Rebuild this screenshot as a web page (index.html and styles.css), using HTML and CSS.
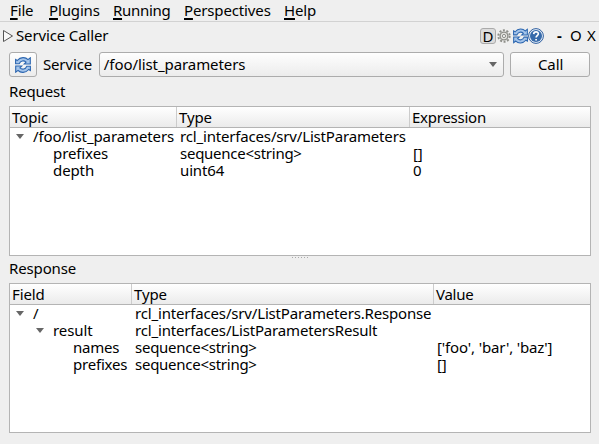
FILE: index.html
```html
<!DOCTYPE html>
<html lang="en">
<head>
<meta charset="utf-8">
<title>Service Caller</title>
<link rel="stylesheet" href="styles.css">
</head>
<body>
<svg class="defs" aria-hidden="true">
  <symbol id="refresh" viewBox="0 0 16 16">
    <g id="half">
      <path d="M.6 6.800V2.500L2.300 3.500C5.500-.3 10.500-.1 13 2.600L15.300.8V7H9.200l1.900-1.900C8.800 3 5.500 3.700 4.200 6.800z" fill="#a4c4ea" stroke="#2c66b0" stroke-width="1.100"/>
    </g>
    <use href="#half" transform="rotate(180 8 8)"/>
  </symbol>
</svg>
<nav class="menu">
  <span class="m-file"><u>F</u>ile</span>
  <span class="m-plugins"><u>P</u>lugins</span>
  <span class="m-running"><u>R</u>unning</span>
  <span class="m-persp"><u>P</u>erspectives</span>
  <span class="m-help"><u>H</u>elp</span>
</nav>
<header class="title">
  <svg class="tri" viewBox="0 0 12 14"><path d="M1.500 1.500v11l9-5.500z" fill="#f8f8f8" stroke="#555"/></svg>
  <span class="name">Service Caller</span>
  <span class="dbtn">D</span>
  <svg class="gear" viewBox="0 0 14 14">
    <circle cx="7" cy="7" r="5.700" fill="none" stroke="#8e8f89" stroke-width="1.900" stroke-dasharray="2 1.580"/>
    <circle cx="7" cy="7" r="3.900" fill="#e2e2de" stroke="#8e8f89" stroke-width="1.400"/>
    <circle cx="7" cy="7" r="1.600" fill="#f5f5f5" stroke="#8e8f89"/>
  </svg>
  <svg class="reload"><use href="#refresh"/></svg>
  <svg class="help" viewBox="0 0 16 16">
    <circle cx="8" cy="8" r="7.400" fill="#e8f0fa" stroke="#2f5f9f"/>
    <circle cx="8" cy="8" r="6" fill="#376bab"/>
    <path d="M5.700 6.100C5.800 3.200 10.500 3.300 10.300 6c-.1 1.600-2.200 1.600-2.200 3.500M8.100 10.900v1.700" fill="none" stroke="#fff" stroke-width="1.700"/>
  </svg>
  <span class="win min">-</span><span class="win max">O</span><span class="win">X</span>
</header>
<main>
  <div class="toolbar">
    <button class="btn sync"><svg><use href="#refresh"/></svg></button>
    <label>Service</label>
    <div class="btn combo"><span>/foo/list_parameters</span><i class="arrow"></i></div>
    <button class="btn call">Call</button>
  </div>
  <h2 class="h-req">Request</h2>
  <section class="tree req">
    <div class="row head"><span>Topic</span><span>Type</span><span>Expression</span></div>
    <div class="row"><span><i class="arrow"></i>/foo/list_parameters</span><span class="long">rcl_interfaces/srv/ListParameters</span><span></span></div>
    <div class="row"><span class="d2">prefixes</span><span class="seq">sequence&lt;string&gt;</span><span>[]</span></div>
    <div class="row"><span class="d2">depth</span><span>uint64</span><span>0</span></div>
  </section>
  <div class="grip"><i></i><i></i><i></i><i></i><i></i><i></i></div>
  <h2 class="h-res">Response</h2>
  <section class="tree res">
    <div class="row head"><span>Field</span><span>Type</span><span>Value</span></div>
    <div class="row"><span><i class="arrow"></i>/</span><span class="long">rcl_interfaces/srv/ListParameters.Response</span><span></span></div>
    <div class="row"><span class="d1"><i class="arrow"></i>result</span><span class="long">rcl_interfaces/ListParametersResult</span><span></span></div>
    <div class="row"><span class="d3">names</span><span class="seq">sequence&lt;string&gt;</span><span>['foo', 'bar', 'baz']</span></div>
    <div class="row"><span class="d3">prefixes</span><span class="seq">sequence&lt;string&gt;</span><span>[]</span></div>
  </section>
</main>
</body>
</html>
```
FILE: styles.css
```css
* { box-sizing: border-box; }
body {
  margin: 0;
  width: 599px;
  height: 444px;
  overflow: hidden;
  background: #efefef;
  color: #000;
  font: 15px/17px "Noto Sans", sans-serif;
  letter-spacing: -0.14px;
  white-space: nowrap;
}
svg { display: block; flex: none; }
.defs { position: absolute; width: 0; height: 0; }

.menu { display: flex; height: 22px; padding: 2px 0 0 10px; border-bottom: 1px solid #d2d2d2; }
.menu u { text-decoration-thickness: 2px; text-underline-offset: 2px; text-decoration-skip-ink: none; }
.m-file { width: 39px; }
.m-plugins { width: 64px; }
.m-running { width: 71px; letter-spacing: -0.3px; }
.m-persp { width: 100px; }

.title { display: flex; align-items: center; height: 27px; padding-left: 2px; }
.tri { width: 12px; height: 14px; }
.name { width: 466px; padding-left: 2px; }
.dbtn {
  width: 16px; height: 16px;
  border: 1px solid #aaa; border-radius: 3px;
  background: #dcdcdc;
  text-align: center; line-height: 15px;
}
.gear { width: 14px; height: 14px; margin: 0 2px 0 1px; }
.reload { width: 15px; height: 16px; }
.help { width: 16px; height: 16px; }
.win { width: 10px; }
.min { margin-left: 13px; width: 13px; font-weight: bold; }
.max { width: 17px; }

main { padding: 0 9px; }
.toolbar { display: flex; align-items: center; height: 31px; }
.toolbar label { width: 62px; padding-left: 6px; }
.btn {
  height: 25px;
  padding: 0;
  border: 1px solid #acacac;
  border-radius: 3px;
  background: linear-gradient(#fefefe, #ececec);
  color: inherit;
  font: inherit;
  letter-spacing: inherit;
}
.sync { display: flex; align-items: center; justify-content: center; width: 28px; }
.sync svg { width: 16px; height: 16px; }
.combo { display: flex; align-items: center; justify-content: space-between; width: 406px; padding: 0 6px 0 4px; letter-spacing: -0.08px; }
.call { width: 80px; margin-left: 6px; padding-left: 1px; }
.arrow { width: 0; height: 0; border: solid transparent; border-width: 5px 4px 0; border-top-color: #666; }

h2 { margin: 0; font: inherit; }
.h-req { height: 26px; padding-top: 3px; }
.h-res { height: 23px; }
.tree { width: 582px; height: 150px; border: 1px solid #b4b4b4; background: #fff; }
.row { display: grid; height: 17px; }
.req .row { grid-template-columns: 167px 233px 1fr; }
.res .row { grid-template-columns: 122px 302px 1fr; }
.row span { display: flex; align-items: center; padding-left: 3px; }
.row span:first-child { padding-left: 23px; letter-spacing: -0.1px; }
.row .arrow { margin: 0 9px 0 -17px; }
.row .d1:first-child, .row .d2:first-child { padding-left: 43px; }
.row .d3:first-child { padding-left: 63px; letter-spacing: -0.2px; }
.row .seq { letter-spacing: -0.26px; }
.row .long { letter-spacing: -0.17px; }
.row.head { height: 21px; border-bottom: 1px solid #b4b4b4; background: linear-gradient(#fff, #ebebeb); }
.row.head span, .row.head span:first-child { padding-left: 2px; }
.row.head span:last-child { letter-spacing: -0.25px; }
.row.head span:not(:last-child) { border-right: 1px solid #ccc; }
.grip { display: flex; justify-content: center; gap: 2px; height: 4px; padding-top: 1px; }
.grip i { width: 1px; height: 1px; background: #aaa; }
```
